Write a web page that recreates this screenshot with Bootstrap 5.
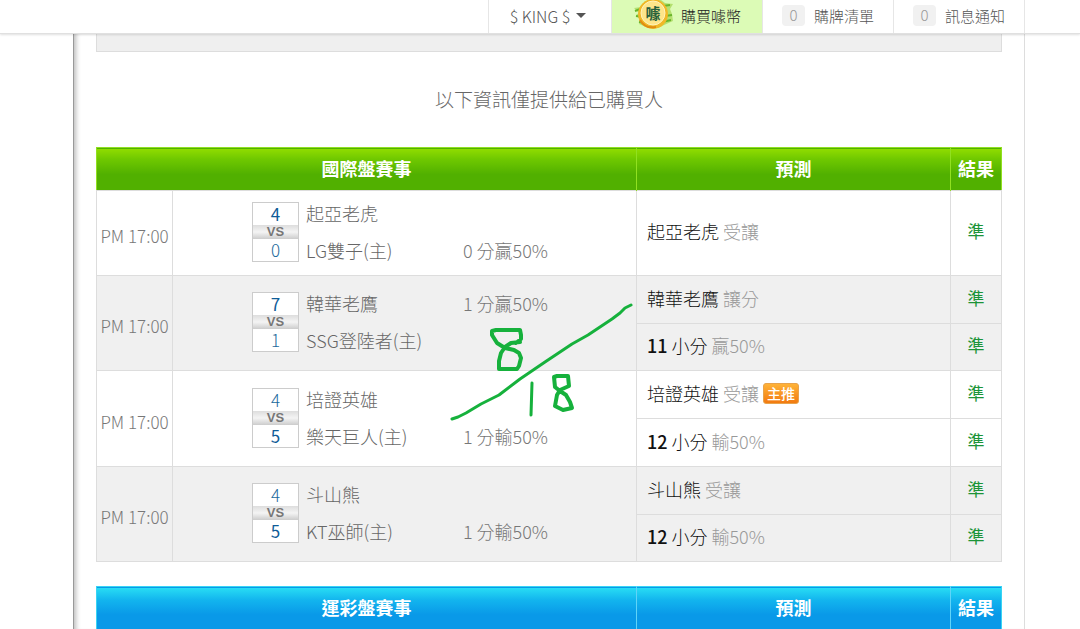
<!DOCTYPE html>
<html lang="zh-Hant">
<head>
<meta charset="utf-8">
<meta name="viewport" content="width=device-width, initial-scale=1">
<title>國際盤賽事預測</title>
<link href="https://cdn.jsdelivr.net/npm/bootstrap@5.3.0/dist/css/bootstrap.min.css" rel="stylesheet">
<style>
  body { font-family: "Noto Sans CJK TC", "Noto Sans", sans-serif; font-size: 17px; font-weight: 300; line-height: 24px; color: #666; background: #fff; overflow-x: hidden; }
  .shell { max-width: 952px; margin: 0 auto; }
  .gutter { padding-left: 18px; }
  .topbar { background: #fff; border-bottom: 1px solid #e0e0e0; box-shadow: 0 1px 2px rgba(0,0,0,.12); height: 34px; z-index: 10; }
  .top-item { display: flex; align-items: center; justify-content: center; width: 131px; height: 33px; padding: 0 0 2px; border: 0; border-right: 1px solid #e6e6e6; background: none; font-size: 15px; font-weight: 300; color: #555; text-decoration: none; white-space: nowrap; }
  .top-user { width: 124px; border-left: 1px solid #e6e6e6; padding-right: 4px; font-size: 16px; }
  .top-user::after { margin-left: 6px; border-top-width: 5px; border-left-width: 5px; border-right-width: 5px; }
  .top-buy { width: 151px; background: #dcfbb6; color: #222; }
  .tally { width: 23px; height: 21px; line-height: 20px; margin-right: 9px; background: #f1f1f1; border-radius: 4px; color: #999; text-align: center; }
  .sheet { border-left: 1px solid #999; border-right: 1px solid #ddd; box-shadow: inset 5px 0 5px -3px #bbb; padding: 0 22px; }
  .panel-end { height: 18px; background: #efefef; border: 1px solid #ddd; border-top: 0; }
  .notice { margin: 35px 0 36px; font-size: 19px; text-align: center; }
  .odds { table-layout: fixed; width: 100%; border-collapse: collapse; margin-bottom: 24px; }
  .odds th { height: 43px; padding: 0 0 2px; text-align: center; color: #fff; font-weight: 700; font-size: 18px; }
  .green thead { background: linear-gradient(#90dc00, #6fc800 25%, #51b000 62%, #51b000); border: 1px solid #91e020; }
  .green th + th { border-left: 1px solid #91e020; }
  .blue thead { background: linear-gradient(#28dcf4, #12b4ee 30%, #0999e8 65%, #0999e8); border: 1px solid #38d4f4; }
  .blue th + th { border-left: 1px solid #60d4f8; }
  .odds td { border: 1px solid #ddd; padding: 0 0 2px; height: 48px; }
  .odds .tall td { height: 85px; }
  .odds .short td { height: 47px; }
  .alt td { background: #f0f0f0; }
  .odds td.when { padding-top: 8px; text-align: center; color: #777; font-size: 17px; white-space: nowrap; }
  .match { display: grid; grid-template-columns: 47px 150px 1fr; column-gap: 7px; padding-left: 79px; align-items: center; }
  .scores { border: 1px solid #ccc; background: #fff; color: #1b6a9c; text-align: center; }
  .scores div { height: 22px; line-height: 22px; }
  .scores div.vs { height: 14px; font: 700 13px/14px "Liberation Sans", sans-serif; color: #777; background: linear-gradient(#ddd, #f4f4f4 50%, #ccc); }
  .scores b { color: #0f5c98; }
  .line { height: 37px; line-height: 37px; font-size: 18px; white-space: nowrap; }
  .line.cut { color: #777; }
  .odds td.pick { padding-left: 10px; padding-bottom: 4px; font-size: 18px; color: #999; }
  .pick span { color: #111; }
  .pick strong { color: #111; font-weight: 500; }
  .odds td.hit { padding-bottom: 4px; text-align: center; color: #1c9438; font-weight: 400; }
  .tag-main { display: inline-block; width: 36px; height: 21px; border: 1px solid #e8a34c; border-radius: 3px; background: linear-gradient(#ffb338, #f27a10); color: #fff; font-size: 14px; font-weight: 500; line-height: 18px; text-align: center; vertical-align: 2px; }
  .pen { position: absolute; left: 354px; top: 154px; pointer-events: none; }
</style>
</head>
<body>
<nav class="topbar sticky-top gutter">
  <div class="shell d-flex justify-content-end">
    <button type="button" class="top-item top-user dropdown-toggle">$ KING $</button>
    <a href="#" class="top-item top-buy">
      <svg width="40" height="33" viewBox="0 0 40 33" class="me-2" aria-hidden="true">
        <path d="M1 9l7-1 4-6 16-1 4 3 8 1-3 5 2 5 1 7-9 4-6 3-12-1-7-3 2-4-5-5 3-2z" fill="#b4e070"/>
        <path d="M2 12l8-3M3 17l6 1M6 23l7 1M30 7l7-1M32 17l7-1M29 23l9-2" stroke="#68b52b" stroke-width="2"/>
        <circle cx="20" cy="15" r="15" fill="#f0b828"/>
        <circle cx="20" cy="14" r="12" fill="#fde58a" stroke="#fff3bb"/>
        <path d="M7 21q5 9 16 7" stroke="#e08c10" stroke-width="2" fill="none"/>
        <text x="20" y="20" text-anchor="middle" font-size="15" font-weight="700" fill="#27603c">噱</text>
      </svg>
      購買噱幣</a>
    <a href="#" class="top-item"><span class="tally">0</span>購牌清單</a>
    <a href="#" class="top-item"><span class="tally">0</span>訊息通知</a>
  </div>
</nav>
<div class="gutter">
<main class="shell sheet">
  <div class="panel-end"></div>
  <p class="notice">以下資訊僅提供給已購買人</p>
  <div class="position-relative">
    <table class="odds green">
      <colgroup><col style="width:76px"><col><col style="width:314px"><col style="width:51px"></colgroup>
      <thead><tr><th colspan="2">國際盤賽事</th><th>預測</th><th>結果</th></tr></thead>
      <tbody>
        <tr class="tall">
          <td class="when">PM 17:00</td>
          <td><div class="match">
            <div class="scores"><div><b>4</b></div><div class="vs">VS</div><div>0</div></div>
            <div><div class="line">起亞老虎</div><div class="line">LG雙子(主)</div></div>
            <div><div class="line cut"></div><div class="line cut">0 分贏50%</div></div>
          </div></td>
          <td class="pick"><span>起亞老虎</span> 受讓</td><td class="hit">準</td>
        </tr>
        <tr class="alt">
          <td class="when" rowspan="2">PM 17:00</td>
          <td rowspan="2"><div class="match">
            <div class="scores"><div><b>7</b></div><div class="vs">VS</div><div>1</div></div>
            <div><div class="line">韓華老鷹</div><div class="line">SSG登陸者(主)</div></div>
            <div><div class="line cut">1 分贏50%</div><div class="line cut"></div></div>
          </div></td>
          <td class="pick"><span>韓華老鷹</span> 讓分</td><td class="hit">準</td>
        </tr>
        <tr class="alt short"><td class="pick"><span><strong>11</strong> 小分</span> 贏50%</td><td class="hit">準</td></tr>
        <tr>
          <td class="when" rowspan="2">PM 17:00</td>
          <td rowspan="2"><div class="match">
            <div class="scores"><div>4</div><div class="vs">VS</div><div><b>5</b></div></div>
            <div><div class="line">培證英雄</div><div class="line">樂天巨人(主)</div></div>
            <div><div class="line cut"></div><div class="line cut">1 分輸50%</div></div>
          </div></td>
          <td class="pick"><span>培證英雄</span> 受讓 <b class="tag-main">主推</b></td><td class="hit">準</td>
        </tr>
        <tr><td class="pick"><span><strong>12</strong> 小分</span> 輸50%</td><td class="hit">準</td></tr>
        <tr class="alt">
          <td class="when" rowspan="2">PM 17:00</td>
          <td rowspan="2"><div class="match">
            <div class="scores"><div>4</div><div class="vs">VS</div><div><b>5</b></div></div>
            <div><div class="line">斗山熊</div><div class="line">KT巫師(主)</div></div>
            <div><div class="line cut"></div><div class="line cut">1 分輸50%</div></div>
          </div></td>
          <td class="pick"><span>斗山熊</span> 受讓</td><td class="hit">準</td>
        </tr>
        <tr class="alt short"><td class="pick"><span><strong>12</strong> 小分</span> 輸50%</td><td class="hit">準</td></tr>
      </tbody>
    </table>
    <!-- hand-drawn pen strokes over the table -->
    <svg class="pen" width="190" height="124" viewBox="450 301 190 124" fill="none" stroke="#16b13c" stroke-width="3" stroke-linecap="round" stroke-linejoin="round" aria-hidden="true">
      <path d="M452 419L458 417 466 413 481 404 499 395 520 379 545 362 572 344 588 335 612 319 620 313 625 308 631 305"/>
      <path d="M520 342L511 343 505 347 501 353 499 361 499 369 517 369 519 366 521 358 519 353 514 350 505 348 497 343 492 335 492 331 496 330 520 330 521 335 521 339 516 343" stroke-width="4"/>
      <path d="M532 383L531 415"/>
      <path d="M555 387L554 377 557 376 568 376 569 386 560 390 557 395 555 406 563 410 572 408 570 402 566 395 560 391 555 387" stroke-width="4"/>
    </svg>
  </div>
  <table class="odds blue mb-0">
    <colgroup><col style="width:76px"><col><col style="width:314px"><col style="width:51px"></colgroup>
    <thead><tr><th colspan="2">運彩盤賽事</th><th>預測</th><th>結果</th></tr></thead>
  </table>
</main>
</div>
<script src="https://cdn.jsdelivr.net/npm/bootstrap@5.3.0/dist/js/bootstrap.bundle.min.js"></script>
</body>
</html>
